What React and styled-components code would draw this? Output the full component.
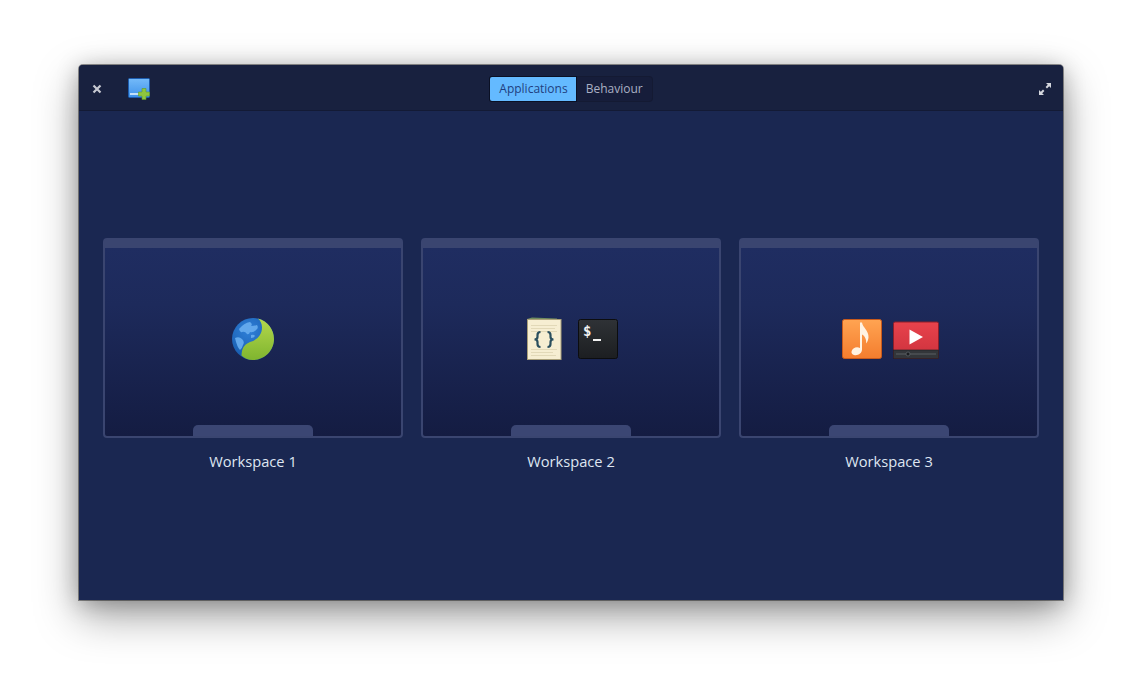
import React from "react";
import styled, { createGlobalStyle } from "styled-components";

const GlobalStyle = createGlobalStyle`
  html, body {
    margin: 0;
    padding: 0;
    background: #fff;
    font-family: "Open Sans", "Noto Sans", sans-serif;
  }
`;

const Page = styled.div`
  width: 1142px;
  height: 693px;
  padding: 65px 79px 93px;
  box-sizing: border-box;
  overflow: hidden;
`;

const Window = styled.div`
  height: 535px;
  display: flex;
  flex-direction: column;
  background: #1a2751;
  border-radius: 4px 4px 0 0;
  box-shadow: 0 0 0 1px rgba(0, 0, 0, 0.4), 0 16px 44px rgba(0, 0, 0, 0.36), 0 3px 22px rgba(0, 0, 0, 0.25);
  overflow: hidden;
`;

const Header = styled.header`
  height: 46px;
  flex: none;
  display: grid;
  grid-template-columns: 1fr auto 1fr;
  align-items: center;
  padding: 2px 11px 0 13px;
  background: #18213f;
  border-bottom: 1px solid #131a35;
  box-sizing: border-box;
`;

const HeaderSide = styled.div`
  display: flex;
  align-items: center;
  justify-content: ${(p) => (p.$end ? "flex-end" : "flex-start")};
  gap: 26px;
`;

const IconButton = styled.span`
  display: flex;
  width: ${(p) => p.$size}px;
  height: ${(p) => p.$size}px;
`;

const Switcher = styled.div`
  display: flex;
  height: 24px;
  border-radius: 3px;
  background: #161d3a;
  box-shadow: 0 0 0 1px #141a33;
  font-size: 12px;
  margin-left: -2px;
`;

const SwitchItem = styled.div`
  display: flex;
  align-items: center;
  padding: ${(p) => (p.$active ? "0 8px 0 9px" : "0 9px 0 10px")};
  color: ${(p) => (p.$active ? "#1f3f80" : "#aab0c4")};
  background: ${(p) => (p.$active ? "#64baff" : "transparent")};
  border-radius: ${(p) => (p.$active ? "2px 0 0 2px" : "0")};
  box-shadow: ${(p) => (p.$active ? "0 0 0 1px #0a1024" : "none")};
`;

const Body = styled.main`
  flex: 1;
  display: flex;
  justify-content: center;
  gap: 18px;
  padding-top: 127px;
`;

const Workspace = styled.section`
  width: 300px;
  display: flex;
  flex-direction: column;
  align-items: center;
`;

const Thumb = styled.div`
  position: relative;
  width: 100%;
  height: 200px;
  box-sizing: border-box;
  display: flex;
  align-items: center;
  justify-content: center;
  gap: ${(p) => p.$gap}px;
  padding: 0 0 7px ${(p) => p.$inset}px;
  border: 2px solid #3a4570;
  border-top-width: 10px;
  border-radius: 4px;
  background: linear-gradient(#1f2d61 0%, #1d2a5b 30%, #141c42 100%);
`;

const Dock = styled.div`
  position: absolute;
  left: 88px;
  bottom: 0;
  width: 120px;
  height: 11px;
  background: #3b4673;
  border-radius: 5px 5px 0 0;
`;

const Label = styled.div`
  margin-top: 13px;
  font-size: 14.67px;
  line-height: 20px;
  color: #dfe6f2;
`;

const CloseIcon = () => (
  <svg viewBox="0 0 10 10" width="10" height="10">
    <path d="M1.5 1.5 L8.5 8.5 M8.5 1.5 L1.5 8.5" stroke="#c6c9d2" strokeWidth="2.2" />
  </svg>
);

const AddWorkspaceIcon = () => (
  <svg viewBox="0 0 22 22" width="22" height="22">
    <defs>
      <linearGradient id="addBlue" x1="0" y1="0" x2="0" y2="1">
        <stop offset="0" stopColor="#74baf9" />
        <stop offset="1" stopColor="#3f92ea" />
      </linearGradient>
    </defs>
    <rect x="0.5" y="0.5" width="21" height="19" rx="1" fill="url(#addBlue)" stroke="#1d5cae" />
    <rect x="2" y="15" width="14" height="2" fill="#c3e0f8" />
    <path d="M14 10.5 h4 v3.5 h3.5 v4 h-3.5 v3.5 h-4 v-3.5 h-3.5 v-4 h3.5 z" fill="#8ec63f" stroke="#5f9a28" strokeWidth="0.6" />
  </svg>
);

const ExpandIcon = () => (
  <svg viewBox="0 0 14 14" width="14" height="14" fill="#d4d7de">
    <path d="M8 1 H13 V6 L11.2 4.2 L9 6.4 L7.6 5 L9.8 2.8 Z" />
    <path d="M1 8 V13 H6 L4.2 11.2 L6.4 9 L5 7.6 L2.8 9.8 Z" />
  </svg>
);

const BrowserIcon = () => (
  <svg viewBox="0 0 44 44" width="44" height="44">
    <defs>
      <radialGradient id="globe" cx="0.4" cy="0.3" r="0.75">
        <stop offset="0" stopColor="#2f80d8" />
        <stop offset="1" stopColor="#1557a8" />
      </radialGradient>
      <linearGradient id="leaf" x1="0" y1="0" x2="0" y2="1">
        <stop offset="0" stopColor="#b4d84c" />
        <stop offset="1" stopColor="#7fb52f" />
      </linearGradient>
    </defs>
    <circle cx="22" cy="22" r="21" fill="url(#globe)" />
    <path d="M8 12 q5 -6 11 -7 q3 2 1 4 q3 0 6 -1 q2 3 -1 5 q-3 3 -6 2 q-1 3 -3 2 q-2 -3 -5 -2 q-2 1 -3 -3z M4 21 q4 -2 7 1 q3 3 1 6 q-1 4 -3 5 q-3 -3 -5 -12z M20 18 q3 -1 4 1 q-1 2 -4 2z" fill="#62a8ec" />
    <path d="M27 1.6 C37 4 43 13 43 22 C43 34 33 43 22 43 C17 43 13 41 10.5 38.5 C11 32 12 28 19 25 C26 23 31 18 31 10.5 C31 7 29.5 3.8 27 1.6 Z" fill="url(#leaf)" />
  </svg>
);

const CodeIcon = () => (
  <svg viewBox="0 0 36 44" width="36" height="44">
    <path d="M1 2 L6 0.5 L31 1.5 V5 H1 Z" fill="#6f8a5e" />
    <rect x="1.5" y="2.5" width="33.5" height="40" fill="#f6eed2" stroke="#a99f78" />
    <g fill="#e2d9b8">
      <rect x="5" y="8" width="26" height="1" />
      <rect x="5" y="11" width="24" height="1" />
      <rect x="5" y="14" width="26" height="1" />
      <rect x="5" y="32" width="26" height="1" />
      <rect x="5" y="35" width="22" height="1" />
      <rect x="5" y="38" width="25" height="1" />
    </g>
    <path d="M14.5 15 q-3 0 -3 3 v2 q0 2.5 -3 2.5 q3 0 3 2.5 v2 q0 3 3 3" fill="none" stroke="#2a4f5e" strokeWidth="2.2" />
    <path d="M21.5 15 q3 0 3 3 v2 q0 2.5 3 2.5 q-3 0 -3 2.5 v2 q0 3 -3 3" fill="none" stroke="#2a4f5e" strokeWidth="2.2" />
  </svg>
);

const TerminalIcon = () => (
  <svg viewBox="0 0 40 40" width="40" height="40">
    <defs>
      <linearGradient id="term" x1="0" y1="0" x2="0" y2="1">
        <stop offset="0" stopColor="#2f3236" />
        <stop offset="1" stopColor="#1c1e21" />
      </linearGradient>
    </defs>
    <rect x="0.5" y="0.5" width="39" height="39" rx="2" fill="url(#term)" stroke="#0c0d0f" />
    <text x="5" y="17" fill="#f2f2f2" fontFamily="'DejaVu Sans Mono', monospace" fontSize="14" fontWeight="700">$</text>
    <rect x="15" y="20" width="8" height="2" fill="#f2f2f2" />
  </svg>
);

const MusicIcon = () => (
  <svg viewBox="0 0 40 40" width="40" height="40">
    <defs>
      <linearGradient id="music" x1="0" y1="0" x2="0" y2="1">
        <stop offset="0" stopColor="#ffa452" />
        <stop offset="1" stopColor="#f47d2e" />
      </linearGradient>
    </defs>
    <rect x="0.5" y="0.5" width="39" height="39" rx="2" fill="url(#music)" stroke="#c85a1c" />
    <path d="M18 3.5 h2 c0.5 5 7 8 6.5 15 c-0.2 2 -1 4.5 -2.5 6 c0.8 -4 -1.5 -8 -4 -9 v15 c0 3.5 -4 6.5 -8 5.5 c-3.5 -1 -3 -4.5 -0.5 -6.5 c2 -1.5 4.5 -1.5 6.5 -0.5 z" fill="#fff3e2" />
  </svg>
);

const VideoIcon = () => (
  <svg viewBox="0 0 46 40" width="46" height="40">
    <defs>
      <linearGradient id="video" x1="0" y1="0" x2="0" y2="1">
        <stop offset="0" stopColor="#e8434c" />
        <stop offset="1" stopColor="#cc313c" />
      </linearGradient>
    </defs>
    <g transform="translate(0 2.5)">
      <rect x="0.5" y="0.5" width="45" height="36.5" rx="1.5" fill="url(#video)" stroke="#8f1e28" />
      <rect x="0.5" y="28.5" width="45" height="8.5" fill="#33363a" stroke="#1d1f22" strokeWidth="0.6" />
      <rect x="3" y="32" width="40" height="1" fill="#5a5e62" />
      <circle cx="15" cy="32.5" r="2" fill="#1b1d20" stroke="#62666b" strokeWidth="0.7" />
      <path d="M16.5 8 L30 15.5 L16.5 23 Z" fill="#fff" />
    </g>
  </svg>
);

const workspaces = [
  { name: "Workspace 1", gap: 0, inset: 0, icons: [BrowserIcon] },
  { name: "Workspace 2", gap: 16, inset: 1, icons: [CodeIcon, TerminalIcon] },
  { name: "Workspace 3", gap: 11, inset: 3, icons: [MusicIcon, VideoIcon] },
];

export default function App() {
  return (
    <>
      <GlobalStyle />
      <Page>
        <Window>
          <Header>
            <HeaderSide>
              <IconButton $size={10}>
                <CloseIcon />
              </IconButton>
              <IconButton $size={22}>
                <AddWorkspaceIcon />
              </IconButton>
            </HeaderSide>
            <Switcher>
              <SwitchItem $active>Applications</SwitchItem>
              <SwitchItem>Behaviour</SwitchItem>
            </Switcher>
            <HeaderSide $end>
              <IconButton $size={14}>
                <ExpandIcon />
              </IconButton>
            </HeaderSide>
          </Header>
          <Body>
            {workspaces.map((ws) => (
              <Workspace key={ws.name}>
                <Thumb $gap={ws.gap} $inset={ws.inset}>
                  {ws.icons.map((Icon, i) => (
                    <Icon key={i} />
                  ))}
                  <Dock />
                </Thumb>
                <Label>{ws.name}</Label>
              </Workspace>
            ))}
          </Body>
        </Window>
      </Page>
    </>
  );
}
